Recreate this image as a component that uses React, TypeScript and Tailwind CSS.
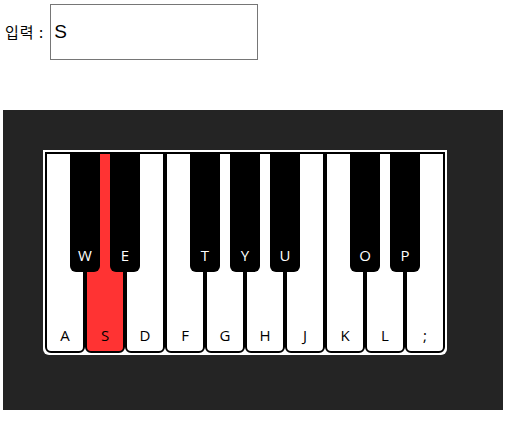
import React from 'react';

const whiteKeys = ['A', 'S', 'D', 'F', 'G', 'H', 'J', 'K', 'L', ';'];

const blackKeys = [
  { label: 'W', pos: 'left-[27px]' },
  { label: 'E', pos: 'left-[67px]' },
  { label: 'T', pos: 'left-[147px]' },
  { label: 'Y', pos: 'left-[187px]' },
  { label: 'U', pos: 'left-[227px]' },
  { label: 'O', pos: 'left-[307px]' },
  { label: 'P', pos: 'left-[347px]' },
];

export default function App() {
  const pressed = 'S';

  return (
    <div className="font-['Open_Sans','Noto_Sans',sans-serif]">
      {/* input row */}
      <div className="flex items-center pl-[5px] pt-1">
        <label className="mr-[6px] text-[15px] tracking-[1px] text-black font-['Noto_Sans_CJK_KR',sans-serif]">
          입력 :
        </label>
        <input
          className="h-[56px] w-[208px] border border-[#767676] px-[3px] text-[19px] text-black font-['Liberation_Sans',sans-serif] outline-none"
          value={pressed}
          readOnly
        />
      </div>

      {/* piano stage */}
      <div className="ml-[3px] mt-[50px] h-[300px] w-[500px] bg-[#242424] p-10">
        <div className="relative flex w-[404px] rounded-b-[6px] bg-white p-[2px]">
          {whiteKeys.map((k) => (
            <div
              key={k}
              className={
                'flex h-[201px] w-10 items-end justify-center rounded-b-[6px] border-2 border-black pb-[5px] text-[15px] text-black ' +
                (k === pressed ? 'bg-[#ff3333]' : 'bg-white')
              }
            >
              {k}
            </div>
          ))}

          {blackKeys.map((b) => (
            <div
              key={b.label}
              className={
                'absolute top-[2px] flex h-[120px] w-[30px] items-end justify-center rounded-b-[6px] bg-black pb-[6px] text-[15px] text-white ' +
                b.pos
              }
            >
              {b.label}
            </div>
          ))}
        </div>
      </div>
    </div>
  );
}
